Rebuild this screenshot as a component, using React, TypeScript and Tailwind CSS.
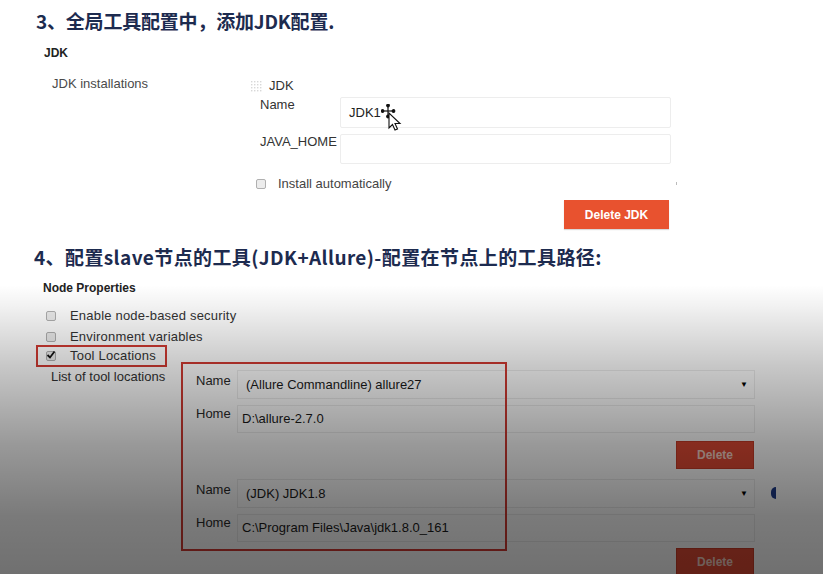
import React from "react";

const sans = { fontFamily: '"Liberation Sans", Arial, sans-serif' };
const cjk = { fontFamily: '"Noto Sans CJK SC", "Noto Sans", sans-serif' };

function Grip() {
  const dots = [];
  for (let r = 0; r < 4; r++) for (let c = 0; c < 4; c++) dots.push(<rect key={`${r}-${c}`} x={1 + c * 3} y={1 + r * 3} width="1.4" height="1.4" fill="#d8d8d8" />);
  return (
    <svg width="13" height="13" viewBox="0 0 13 13" className="shrink-0">
      {dots}
    </svg>
  );
}

function Check({ checked = false }: { checked?: boolean }) {
  return (
    <div className="w-[10px] h-[10px] rounded-[2px] border border-[#b0b0b0] bg-[#ececec] relative shrink-0">
      {checked && (
        <svg width="10" height="10" viewBox="0 0 10 10" className="absolute -left-[1px] -top-[2px]">
          <path d="M1.5 5 L4 7.5 L8.5 1.5" stroke="#111" strokeWidth="1.8" fill="none" />
        </svg>
      )}
    </div>
  );
}

function MoveCursor() {
  return (
    <svg width="22" height="28" viewBox="0 0 22 28" className="absolute left-[40px] top-[6px]">
      <g stroke="#111" strokeWidth="1.2" fill="#111">
        <line x1="7" y1="1" x2="7" y2="13" />
        <line x1="1" y1="7" x2="13" y2="7" />
        <circle cx="7" cy="1.5" r="1.3" />
        <circle cx="7" cy="12.5" r="1.3" />
        <circle cx="1.5" cy="7" r="1.3" />
        <circle cx="12.5" cy="7" r="1.3" />
      </g>
      <path d="M8 9 L8 24 L11.5 20.5 L14 26 L16.5 25 L14 19.5 L19 19.5 Z" fill="#fff" stroke="#111" strokeWidth="1.1" />
    </svg>
  );
}

function ToolEntry({ name, home, knob = false }: { name: string; home: string; knob?: boolean }) {
  return (
    <div className="flex flex-col">
      <div className="flex items-start">
        <div className="w-[41px] pt-[3px] leading-[16px] text-[13px] text-[#2a2a2a]">Name</div>
        <div className="w-[518px] h-[29px] bg-white border border-[#ececec] flex items-center pl-[8px] pr-[6px] text-[13px] text-[#1a1a1a]">
          <span className="flex-1">{name}</span>
          <span className="text-[8px] text-black">▼</span>
        </div>
        {knob && <div className="ml-[16px] mt-[8px] w-[5px] h-[12px] rounded-l-full bg-[#1e3c8c]" />}
      </div>
      <div className="flex items-start mt-[6px]">
        <div className="w-[41px] pt-[1px] leading-[16px] text-[13px] text-[#2a2a2a]">Home</div>
        <div className="w-[518px] h-[28px] bg-white border border-[#ececec] flex items-center pl-[4px] text-[13px] text-[#1a1a1a]">
          {home}
        </div>
      </div>
    </div>
  );
}

function DeleteBtn({ top }: { top: string }) {
  return (
    <div className={`flex justify-end w-[559px] ${top}`}>
      <div className="w-[78px] h-[28px] mr-[1px] bg-[#e04a34] border border-[#c83c28] flex items-center justify-center text-[12px] font-bold text-[#f6d2c6]">
        Delete
      </div>
    </div>
  );
}

export default function App() {
  return (
    <div className="relative w-[823px] h-[574px] overflow-hidden bg-white" style={sans}>
      {/* Section 3 */}
      <div className="pt-[10px] pl-[36px] h-[32px] leading-[22px] text-[19px] font-bold text-[#1d2b4f] tracking-[-0.2px]" style={cjk}>
        3、全局工具配置中，添加JDK配置.
      </div>
      <div className="mt-[13px] pl-[44px] leading-[16px] text-[12px] font-bold text-[#222]">JDK</div>
      <div className="flex mt-[15px]">
        <div className="w-[250px] shrink-0 pl-[52px] leading-[16px] text-[13px] text-[#4a4a4a]">JDK installations</div>
        <div className="flex flex-col w-[421px] pt-[2px]">
          <div className="flex items-center h-[16px]">
            <Grip />
            <span className="ml-[6px] text-[13px] text-[#333]">JDK</span>
          </div>
          <div className="flex items-start mt-[3px]">
            <div className="w-[90px] pl-[10px] leading-[16px] text-[13px] text-[#333]">Name</div>
            <div className="relative w-[331px] h-[31px] bg-white border border-[#ededed] rounded-[2px] flex items-center pl-[8px] text-[13px] text-[#222]">
              JDK1
              <MoveCursor />
            </div>
          </div>
          <div className="flex items-start mt-[6px]">
            <div className="w-[90px] pl-[10px] leading-[16px] text-[13px] text-[#333]">JAVA_HOME</div>
            <div className="w-[331px] h-[30px] bg-white border border-[#ededed] rounded-[2px]" />
          </div>
          <div className="flex items-center h-[16px] mt-[12px] pl-[6px] relative">
            <Check />
            <span className="ml-[12px] text-[13px] text-[#444]">Install automatically</span>
            <div className="absolute right-[-6px] top-[6px] w-[1px] h-[3px] bg-[#bbb]" />
          </div>
          <div className="flex justify-end mt-[8px] pr-[2px]">
            <div className="w-[105px] h-[29px] bg-[#e8522f] shadow-[0_1px_1px_rgba(0,0,0,0.15)] flex items-center justify-center text-[12px] font-bold text-white">
              Delete JDK
            </div>
          </div>
        </div>
      </div>

      {/* Section 4 */}
      <div className="mt-[17px] pl-[34px] h-[22px] leading-[22px] text-[19px] font-bold text-[#1d2b4f] tracking-[0.4px]" style={cjk}>
        4、配置slave节点的工具(JDK+Allure)-配置在节点上的工具路径:
      </div>
      <div className="mt-[12px] pl-[43px] leading-[16px] text-[12px] font-bold text-[#222]">Node Properties</div>
      <div className="flex items-center h-[16px] mt-[12px] pl-[46px]">
        <Check />
        <span className="ml-[14px] text-[13px] text-[#333] tracking-[0.2px]">Enable node-based security</span>
      </div>
      <div className="flex items-center h-[16px] mt-[5px] pl-[46px]">
        <Check />
        <span className="ml-[14px] text-[13px] text-[#333] tracking-[0.2px]">Environment variables</span>
      </div>
      <div className="ml-[36px] w-[131px] h-[22px] border-2 border-[#d13a32] flex items-center pl-[8px]">
        <Check checked />
        <span className="ml-[14px] text-[13px] text-[#333] tracking-[0.2px]">Tool Locations</span>
      </div>
      <div className="flex mt-[1px]">
        <div className="w-[181px] shrink-0 pl-[51px] pt-[1px] leading-[16px] text-[13px] text-[#333]">List of tool locations</div>
        <div className="relative flex flex-col pl-[15px] pt-[2px]">
          <ToolEntry name="(Allure Commandline) allure27" home="D:\allure-2.7.0" />
          <DeleteBtn top="mt-[8px]" />
          <div className="mt-[10px]">
            <ToolEntry name="(JDK) JDK1.8" home="C:\Program Files\Java\jdk1.8.0_161" knob />
          </div>
          <DeleteBtn top="mt-[6px]" />
          <div className="absolute left-0 top-[-6px] w-[326px] h-[189px] border-2 border-[#d13a32] pointer-events-none" />
        </div>
      </div>

      {/* video darkening gradient */}
      <div className="absolute left-0 top-[285px] w-[823px] h-[289px] pointer-events-none bg-[linear-gradient(to_bottom,rgba(0,0,0,0)_0%,rgba(0,0,0,0.06)_8%,rgba(0,0,0,0.22)_28%,rgba(0,0,0,0.40)_55%,rgba(0,0,0,0.52)_80%,rgba(0,0,0,0.56)_100%)]" />
    </div>
  );
}
